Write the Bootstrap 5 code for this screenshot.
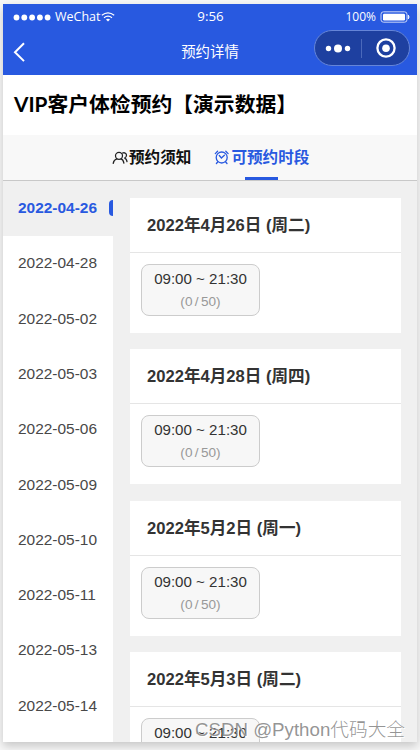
<!DOCTYPE html>
<html lang="zh-CN">
<head>
<meta charset="utf-8">
<meta name="viewport" content="width=device-width, initial-scale=1">
<title>预约详情</title>
<link href="https://cdn.jsdelivr.net/npm/bootstrap@5.3.0/dist/css/bootstrap.min.css" rel="stylesheet">
<style>
body{background:#f7f7f7;height:750px;overflow:hidden;padding:4px 3px 0;font-family:"Liberation Sans","Noto Sans CJK SC",sans-serif;color:#333}
.phone{width:414px;height:738px;background:#f0f0f0;box-shadow:0 4px 9px rgba(0,0,0,.2)}
.topbar{height:71px;background:#2859e0;font-family:"Open Sans","Noto Sans CJK SC",sans-serif}
.status{height:25px;font-size:12.5px;line-height:25px;padding:0 7px 0 10px}
.status .clock{font-size:13.3px;margin-right:2px}
.navline{height:46px;padding:0 7px 0 10px}
.navline .caption{font-size:14.4px;line-height:46px;margin-right:3px}
.side-cell{flex:1 1 0}
.capsule{width:96px;height:36px;margin-top:-8px;border:1px solid #6585d8;background:#1e40a0}
.page-title{height:60px;padding-left:11px;font:700 20.8px/58px Lato,"Noto Sans CJK SC",sans-serif;color:#000}
.tabs{height:46px;background:#f8f8f8;border-bottom:1px solid #c8c8c8;font-weight:700;font-size:15.6px;line-height:45px;color:#111}
.tab-a{margin-left:109px}
.tab-b{margin-left:23px;color:#2859e0}
.tab-b::after{content:"";position:absolute;left:31px;bottom:0;width:33px;height:3px;background:#2859e0}
.dates{width:110px;background:#fff;font-size:15.45px}
.date-item{height:55.3px;flex:none;padding:0 0 2px 15px;color:#484848}
.date-item.current{background:#f0f0f0;color:#2859e0;font-weight:700}
.marker{width:4px;height:16px;background:#2859e0;border-radius:4px 0 0 4px}
.days{padding:17px 0 0 17px}
.day{width:271px;height:135px;margin-bottom:16.4px;background:#fff;flex:none}
.day h2{height:55px;margin:0;padding-left:17px;font-size:16.6px;line-height:55px;font-weight:700;border-bottom:1px solid #e5e5e5}
.slot{width:119px;height:52px;margin:11px 0 0 11px;border:1px solid #ccc;border-radius:8px;background:#f7f7f7;text-align:center}
.slot .hours{font-size:15.1px;line-height:18px;padding-top:5px}
.slot .quota{font-size:13.6px;line-height:18px;margin-top:5px;color:#999;word-spacing:-1.4px}
.watermark{left:195px;top:716px;font-size:18.7px;line-height:27px;color:rgba(130,130,130,.85);text-shadow:1px 1px 0 #fff;font-weight:300;font-family:"Liberation Sans","Noto Sans CJK SC",sans-serif}
</style>
</head>
<body>
<main class="phone d-flex flex-column overflow-visible">
  <header class="topbar text-white flex-shrink-0">
    <div class="status d-flex align-items-center">
      <div class="side-cell d-flex align-items-center">
        <svg width="38" height="8" fill="#fff"><circle cx="3.5" cy="4.5" r="2.9"/><circle cx="11.3" cy="4.5" r="2.9"/><circle cx="19.1" cy="4.5" r="2.9"/><circle cx="26.9" cy="4.5" r="2.9"/><circle cx="34.6" cy="4.5" r="2.9"/></svg>
        <span class="ms-1">WeChat</span>
        <svg width="14" height="10" viewBox="0 0 14 10" fill="none" stroke="#fff" stroke-width="1.2"><path d="M.8 3.2Q7-1.6 13.2 3.2M3 5.7Q7 2.6 11 5.7"/><path d="M5 7.6Q7 6 9 7.6L7 9.5Z" fill="#fff" stroke="none"/></svg>
      </div>
      <span class="clock">9:56</span>
      <div class="side-cell d-flex align-items-center justify-content-end">
        <span style="font-size:12px">100%</span>
        <svg class="ms-1" width="30" height="12" viewBox="0 0 30 12"><rect x="1" y=".8" width="26" height="10.4" rx="2.5" fill="none" stroke="#c9d5f7"/><rect x="3" y="2.7" width="22" height="6.8" rx="1.2" fill="#fff"/><path d="M28.3 4Q30 6 28.3 8Z" fill="#fff" stroke="#fff" stroke-width=".7"/></svg>
      </div>
    </div>
    <div class="navline d-flex align-items-center">
      <div class="side-cell d-flex">
        <svg width="13" height="20" viewBox="0 0 13 20" fill="none" stroke="#fff" stroke-width="2"><path d="M11 1.3 2 10.3l9 8.8"/></svg>
      </div>
      <span class="caption">预约详情</span>
      <div class="side-cell d-flex justify-content-end">
        <div class="capsule rounded-pill d-flex align-items-center">
          <svg width="94" height="34" viewBox="0 0 94 34" fill="#fff"><circle cx="13.5" cy="17.5" r="2.7"/><circle cx="23" cy="17.5" r="4"/><circle cx="32.5" cy="17.5" r="2.7"/><path d="M46.5 8v19" stroke="#4b69bb"/><circle cx="71" cy="17" r="8.6" fill="none" stroke="#fff" stroke-width="2.3"/><circle cx="71" cy="17.3" r="3.8"/></svg>
        </div>
      </div>
    </div>
  </header>
  <h1 class="page-title bg-white m-0 flex-shrink-0">VIP客户体检预约【演示数据】</h1>
  <nav class="tabs d-flex flex-shrink-0">
    <div class="tab-a d-flex align-items-center">
      <svg width="17" height="14" viewBox="0 0 17 14" fill="none" stroke="#222" stroke-width="1.25" stroke-linecap="round"><circle cx="7" cy="4.8" r="3.5"/><path d="M1.2 12.3C1.7 9.7 3 8.4 4.9 7.9M9 7.9c1.5.5 2.5 2 2.9 4.2M10.5 2c2.4-.8 4 .5 4 2.3 0 1.4-.8 2.4-2.1 2.8 1.5.3 2.3 1.5 2.6 3.5"/></svg>
      <span>预约须知</span>
    </div>
    <div class="tab-b d-flex align-items-center position-relative">
      <svg width="17" height="15" viewBox="0 0 17 15" fill="none" stroke="#2859e0" stroke-width="1.3" stroke-linecap="round"><circle cx="7.7" cy="7.5" r="5.5"/><path d="M5.3 5.5 7.4 8l3-2.8M1.3 3.6 3.6 1.3M11.8 1.3l2.3 2.3M3.7 12l-1.3 1.5M11.7 12l1.3 1.5"/></svg>
      <span>可预约时段</span>
    </div>
  </nav>
  <div class="d-flex flex-grow-1 overflow-hidden" style="min-height:0">
    <aside class="dates d-flex flex-column flex-shrink-0">
      <div class="date-item current d-flex align-items-center justify-content-between"><span>2022-04-26</span><span class="marker"></span></div>
      <div class="date-item d-flex align-items-center">2022-04-28</div>
      <div class="date-item d-flex align-items-center">2022-05-02</div>
      <div class="date-item d-flex align-items-center">2022-05-03</div>
      <div class="date-item d-flex align-items-center">2022-05-06</div>
      <div class="date-item d-flex align-items-center">2022-05-09</div>
      <div class="date-item d-flex align-items-center">2022-05-10</div>
      <div class="date-item d-flex align-items-center">2022-05-11</div>
      <div class="date-item d-flex align-items-center">2022-05-13</div>
      <div class="date-item d-flex align-items-center">2022-05-14</div>
    </aside>
    <section class="days d-flex flex-column">
      <article class="day"><h2>2022年4月26日 (周二)</h2><div class="slot"><div class="hours">09:00 ~ 21:30</div><div class="quota">(0 / 50)</div></div></article>
      <article class="day"><h2>2022年4月28日 (周四)</h2><div class="slot"><div class="hours">09:00 ~ 21:30</div><div class="quota">(0 / 50)</div></div></article>
      <article class="day"><h2>2022年5月2日 (周一)</h2><div class="slot"><div class="hours">09:00 ~ 21:30</div><div class="quota">(0 / 50)</div></div></article>
      <article class="day"><h2>2022年5月3日 (周二)</h2><div class="slot"><div class="hours">09:00 ~ 21:30</div><div class="quota">(0 / 50)</div></div></article>
    </section>
  </div>
</main>
<div class="watermark position-absolute text-nowrap">CSDN @Python代码大全</div>
<script src="https://cdn.jsdelivr.net/npm/bootstrap@5.3.0/dist/js/bootstrap.bundle.min.js"></script>
</body>
</html>
